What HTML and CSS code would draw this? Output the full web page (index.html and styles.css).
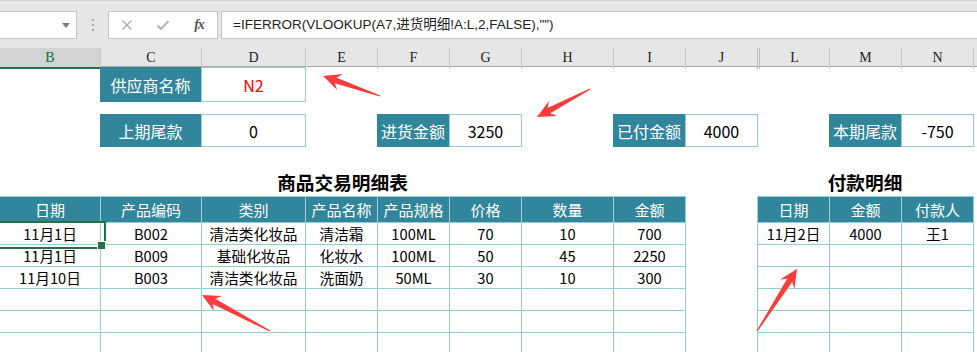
FILE: index.html
```html
<!DOCTYPE html>
<html lang="zh">
<head>
<meta charset="utf-8">
<title>付款明细</title>
<link rel="stylesheet" href="styles.css">
</head>
<body>
<div class="app">
  <div class="fbar">
    <div class="namebox">
      <svg class="dd" width="8" height="5" viewBox="0 0 8 5"><polygon points="0,0 8,0 4,5" fill="#7a7a7a"/></svg>
    </div>
    <div class="grip"><i></i><i></i><i></i></div>
    <div class="fxbox">
      <span class="slot"><svg width="12" height="12" viewBox="0 0 12 12"><path d="M1.5 1.5 L10.5 10.5 M10.5 1.5 L1.5 10.5" stroke="#ababab" stroke-width="1.4" fill="none"/></svg></span>
      <span class="slot"><svg width="14" height="12" viewBox="0 0 14 12"><path d="M1.5 6.5 L5 10 L12.5 2" stroke="#b5b5b5" stroke-width="2" fill="none"/></svg></span>
      <span class="slot fx">fx</span>
    </div>
    <div class="formula">=IFERROR(VLOOKUP(A7,进货明细!A:L,2,FALSE),"")</div>
  </div>

  <div class="colhead">
    <div class="ch sel">B</div>
    <div class="ch">C</div>
    <div class="ch">D</div>
    <div class="ch">E</div>
    <div class="ch">F</div>
    <div class="ch">G</div>
    <div class="ch">H</div>
    <div class="ch">I</div>
    <div class="ch">J</div>
    <div class="ch hid">L</div>
    <div class="ch">M</div>
    <div class="ch">N</div>
    <div class="ch"></div>
  </div>

  <div class="sheet">
    <div class="lbl r1 cC">供应商名称</div>
    <div class="val r1 cD red">N2</div>

    <div class="lbl r3 cC">上期尾款</div>
    <div class="val r3 cD">0</div>
    <div class="lbl r3 cF">进货金额</div>
    <div class="val r3 cG">3250</div>
    <div class="lbl r3 cI">已付金额</div>
    <div class="val r3 cJ">4000</div>
    <div class="lbl r3 cM">本期尾款</div>
    <div class="val r3 cN">-750</div>

    <div class="ttl tl">商品交易明细表</div>
    <div class="ttl tr">付款明细</div>

    <div class="tbl main">
      <div class="c h first">日期</div><div class="c h">产品编码</div><div class="c h">类别</div><div class="c h">产品名称</div><div class="c h">产品规格</div><div class="c h">价格</div><div class="c h">数量</div><div class="c h last">金额</div>

      <div class="c first cur">11月1日</div><div class="c">B002</div><div class="c">清洁类化妆品</div><div class="c">清洁霜</div><div class="c">100ML</div><div class="c">70</div><div class="c">10</div><div class="c last">700</div>

      <div class="c first">11月1日</div><div class="c">B009</div><div class="c">基础化妆品</div><div class="c">化妆水</div><div class="c">100ML</div><div class="c">50</div><div class="c">45</div><div class="c last">2250</div>

      <div class="c first">11月10日</div><div class="c">B003</div><div class="c">清洁类化妆品</div><div class="c">洗面奶</div><div class="c">50ML</div><div class="c">30</div><div class="c">10</div><div class="c last">300</div>

      <div class="c first"></div><div class="c"></div><div class="c"></div><div class="c"></div><div class="c"></div><div class="c"></div><div class="c"></div><div class="c last"></div>
      <div class="c first"></div><div class="c"></div><div class="c"></div><div class="c"></div><div class="c"></div><div class="c"></div><div class="c"></div><div class="c last"></div>
      <div class="c first"></div><div class="c"></div><div class="c"></div><div class="c"></div><div class="c"></div><div class="c"></div><div class="c"></div><div class="c last"></div>
    </div>

    <div class="tbl pay">
      <div class="c h">日期</div><div class="c h">金额</div><div class="c h last">付款人</div>
      <div class="c">11月2日</div><div class="c">4000</div><div class="c last">王1</div>
      <div class="c"></div><div class="c"></div><div class="c last"></div>
      <div class="c"></div><div class="c"></div><div class="c last"></div>
      <div class="c"></div><div class="c"></div><div class="c last"></div>
      <div class="c"></div><div class="c"></div><div class="c last"></div>
      <div class="c"></div><div class="c"></div><div class="c last"></div>
    </div>
  </div>

  <svg class="arrows" width="977" height="352" viewBox="0 0 977 352">
    <g fill="#fb3c3c">
      <polygon transform="translate(323 76) rotate(199.3)" points="0,0 -18,-8.5 -13.5,-3 -60.4,-0.6 -60.4,0.6 -13.5,3 -18,8.5"/>
      <polygon transform="translate(537 117) rotate(152.2)" points="0,0 -18,-8.5 -13.5,-3 -59.9,-0.6 -59.9,0.6 -13.5,3 -18,8.5"/>
      <polygon transform="translate(202 295) rotate(207.9)" points="0,0 -18,-8.5 -13.5,-3 -76.9,-0.6 -76.9,0.6 -13.5,3 -18,8.5"/>
      <polygon transform="translate(797 269) rotate(-57.2)" points="0,0 -18,-8.5 -13.5,-3 -73.8,-0.6 -73.8,0.6 -13.5,3 -18,8.5"/>
    </g>
  </svg>
</div>
</body>
</html>
```

FILE: styles.css
```css
* { box-sizing: border-box; margin: 0; padding: 0; }

html, body {
  width: 977px;
  height: 352px;
  overflow: hidden;
  background: #fff;
}

body {
  font-family: "Noto Sans CJK SC", "Liberation Sans", sans-serif;
  color: #000;
}

.app {
  position: relative;
  width: 977px;
  height: 352px;
  overflow: hidden;
}

/* formula bar */
.fbar {
  height: 48px;
  background: #e6e6e6;
  border-top: 1px solid #d4d4d4;
  padding-top: 10px;
  display: flex;
  align-items: flex-start;
}

.namebox {
  width: 78px;
  height: 28px;
  margin-left: -1px;
  background: #fff;
  border: 1px solid #c6c6c6;
  display: flex;
  align-items: center;
  justify-content: flex-end;
  padding-right: 6px;
}

.grip {
  width: 31px;
  height: 28px;
  display: flex;
  flex-direction: column;
  align-items: center;
  justify-content: center;
  gap: 3px;
}

.grip i {
  display: block;
  width: 2px;
  height: 2px;
  background: #a9a9a9;
}

.fxbox {
  width: 110px;
  height: 28px;
  background: #fff;
  border: 1px solid #c6c6c6;
  display: flex;
  align-items: center;
}

.slot {
  width: 36px;
  height: 26px;
  display: flex;
  align-items: center;
  justify-content: center;
}

.fx {
  font-family: "Liberation Serif", serif;
  font-style: italic;
  font-weight: 700;
  font-size: 14px;
  color: #555;
  letter-spacing: -1px;
}

.formula {
  flex: 1;
  height: 28px;
  margin-left: 3px;
  margin-right: -2px;
  background: #fff;
  border: 1px solid #c6c6c6;
  padding-left: 11px;
  font-family: "Liberation Sans", "Noto Sans CJK SC", sans-serif;
  font-size: 13.5px;
  line-height: 26px;
  color: #222;
  white-space: nowrap;
}

/* column header */
.colhead {
  display: grid;
  grid-template-columns: 100px 101px 104px 72px 72px 72px 92px 72px 72px 72px 72px 72px 4px;
  height: 19px;
  background: #e6e6e6;
  border-bottom: 1px solid #ababab;
}

.ch {
  border-left: 1px solid #c8c8c8;
  font-family: "Liberation Serif", serif;
  font-size: 14px;
  line-height: 19px;
  text-align: center;
  color: #222;
}

.ch.sel {
  border-left: none;
  background: #d3d3d3;
  color: #1e6b41;
  border-bottom: 2px solid #217346;
}

.ch.hid {
  border-left: 3px double #bdbdbd;
}

/* sheet grid */
.sheet {
  display: grid;
  grid-template-columns: 100px 101px 104px 72px 72px 72px 92px 72px 72px 72px 72px 72px 4px;
  grid-template-rows: 35px 12px 33px 49px 26px repeat(6, 22px);
}

.r1 { grid-row: 1; }
.r3 { grid-row: 3; }
.cC { grid-column: 2; }
.cD { grid-column: 3; }
.cF { grid-column: 5; }
.cG { grid-column: 6; }
.cI { grid-column: 8; }
.cJ { grid-column: 9; }
.cM { grid-column: 11; }
.cN { grid-column: 12; }

.lbl {
  background: #31869b;
  color: #fff;
  font-size: 16px;
  display: flex;
  align-items: center;
  justify-content: center;
  white-space: nowrap;
}

.val {
  border: 1px solid #92cddc;
  margin-right: -1px;
  font-size: 16px;
  display: flex;
  align-items: center;
  justify-content: center;
}

.val.red { color: #ff0000; }

.ttl {
  grid-row: 4;
  align-self: end;
  text-align: center;
  font-weight: 700;
  font-size: 18.67px;
  line-height: 25px;
  padding-bottom: 2px;
}

.ttl.tl { grid-column: 1 / 9; }
.ttl.tr { grid-column: 10 / 13; }

.tbl {
  display: grid;
  grid-row: 5 / 12;
  grid-template-rows: 26px repeat(6, 22px);
  margin-right: -1px;
}

.tbl.main {
  grid-column: 1 / 9;
  grid-template-columns: 100px 101px 104px 72px 72px 72px 92px 73px;
}

.tbl.pay {
  grid-column: 10 / 13;
  grid-template-columns: 72px 72px 73px;
}

.c {
  border-left: 1px solid #92cddc;
  border-top: 1px solid #92cddc;
  font-size: 14.67px;
  display: flex;
  align-items: center;
  justify-content: center;
  white-space: nowrap;
}

.c.first { border-left: none; }
.c.last { border-right: 1px solid #92cddc; }

.c.h {
  background: #31869b;
  color: #fff;
  font-size: 15px;
  border-left-color: #9fd2de;
  border-top-color: #92cddc;
}

.c.h.first { border-left: none; }
.c.h.last { border-right-color: #92cddc; }

.cur { position: relative; }

.cur::before {
  content: "";
  position: absolute;
  left: -2px;
  top: -2px;
  width: 104px;
  height: 24px;
  border: 2px solid #217346;
}

.cur::after {
  content: "";
  position: absolute;
  left: 97px;
  top: 18px;
  width: 7px;
  height: 7px;
  background: #217346;
  border: 1px solid #fff;
}

.arrows {
  position: absolute;
  left: 0;
  top: 0;
  pointer-events: none;
}
```
